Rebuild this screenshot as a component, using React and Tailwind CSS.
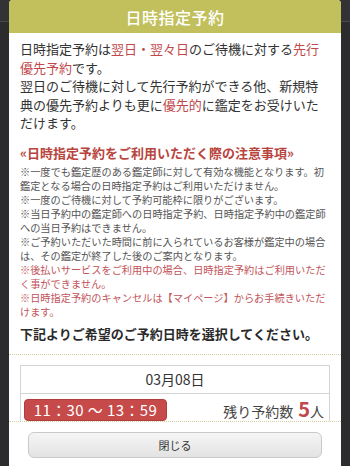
const notes = [
  { text: '※一度でも鑑定歴のある鑑定師に対して有効な機能となります。初鑑定となる場合の日時指定予約はご利用いただけません。' },
  { text: '※一度のご待機に対して予約可能枠に限りがございます。' },
  { text: '※当日予約中の鑑定師への日時指定予約、日時指定予約中の鑑定師への当日予約はできません。' },
  { text: '※ご予約いただいた時間に前に入られているお客様が鑑定中の場合は、その鑑定が終了した後のご案内となります。' },
  { text: '※後払いサービスをご利用中の場合、日時指定予約はご利用いただく事ができません。', red: true },
  { text: '※日時指定予約のキャンセルは【マイページ】からお手続きいただけます。', red: true },
]

function ReserveModal() {
  return (
    <div className="absolute left-[9px] top-0 w-[332px] h-[466px] bg-white rounded-t-[4px] flex flex-col overflow-hidden">
      {/* header */}
      <div className="h-[33px] shrink-0 bg-[#c1c05c] flex items-center justify-center text-white text-[16px] font-medium tracking-[0.5px]">
        日時指定予約
      </div>

      {/* body */}
      <div className="flex-1 overflow-hidden px-[11px] pt-[7px] text-[#333]">
        <p className="text-[13px] leading-[18.5px]">
          日時指定予約は<span className="text-[#c0484b]">翌日・翌々日</span>のご待機に対する<span className="text-[#c0484b]">先行優先予約</span>です。
          <br />
          翌日のご待機に対して先行予約ができる他、新規特典の優先予約よりも更に<span className="text-[#c0484b]">優先的</span>に鑑定をお受けいただけます。
        </p>

        <h3 className="mt-[11px] text-[13px] leading-[18px] font-bold text-[#b8443e]">
          «日時指定予約をご利用いただく際の注意事項»
        </h3>
        <div className="mt-[3px] text-[10.2px] leading-[14px] text-[#555]">
          {notes.map((n, i) => (
            <div key={i} className={n.red ? 'text-[#c2545a]' : ''}>{n.text}</div>
          ))}
        </div>

        <p className="mt-[6px] text-[13px] leading-[18px] font-bold text-[#2a2a2a]">
          下記よりご希望のご予約日時を選択してください。
        </p>

        <div className="-mx-[11px] mt-[11px] border-t border-dotted border-[#d8cf9f]" />

        {/* date table */}
        <div className="mt-[10px] border border-[#d4d4d4]">
          <div className="h-[28px] flex items-center justify-center border-b border-[#d4d4d4] text-[14px] text-[#333]">
            03月08日
          </div>
          <div className="flex items-center justify-between pl-[3px] pr-[5px] pt-[5px] pb-[6px]">
            <div className="w-[143px] h-[22px] rounded-[4px] bg-[#c64a4a] border border-[#b33c3c] flex items-center justify-center text-white text-[15px] tracking-[0.4px]">
              11：30 〜 13：59
            </div>
            <div className="flex items-baseline text-[14px] text-[#444]">
              <span>残り予約数</span>
              <span className="ml-[5px] text-[20px] font-bold text-[#c0484b] leading-none">5</span>
              <span>人</span>
            </div>
          </div>
        </div>
      </div>

      {/* footer */}
      <div className="h-[45px] shrink-0 border-t border-dotted border-[#d8cf9f] bg-white px-[19px] pt-[10px]">
        <button className="w-full h-[26px] rounded-[6px] border border-[#c9c9c9] bg-gradient-to-b from-[#f5f5f5] to-[#e3e3e3] text-[11px] text-[#333] flex items-center justify-center">
          閉じる
        </button>
      </div>
    </div>
  )
}

export default function App() {
  return (
    <div className="relative w-[350px] h-[466px] bg-[#2c2c2f] overflow-hidden" style={{ fontFamily: '"Noto Sans CJK JP", "Noto Sans", sans-serif' }}>
      <div className="h-[22px] bg-[#333336] border-b border-[#4a4a4c]" />
      <ReserveModal />
    </div>
  )
}
